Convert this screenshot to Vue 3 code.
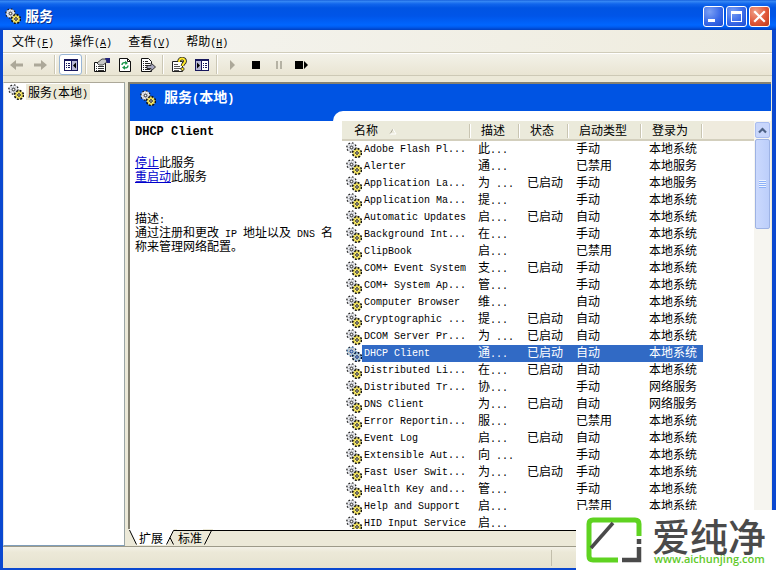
<script setup>
import { h, ref } from 'vue'

// Latin runs are set in a half-width monospace face beside the full-width characters.
const Mixed = (props) =>
  props.text.split(/([\x20-\x7e]+)/).filter(Boolean).map((run) =>
    /^[\x20-\x7e]/.test(run) ? h('span', { class: 'latin' }, run) : run
  )
Mixed.props = ['text']

const Gears = () =>
  h('svg', { class: 'gears', viewBox: '0 0 16 16', width: 16, height: 16, 'aria-hidden': 'true' }, [
    h('circle', { cx: 5.5, cy: 5.5, r: 4.6, fill: '#c3c6cd', stroke: '#222', 'stroke-width': 1.5, 'stroke-dasharray': '1.5 2.1' }),
    h('circle', { cx: 5.5, cy: 5.5, r: 3.2, fill: 'none', stroke: '#f2f3f6', 'stroke-width': 1.4, 'stroke-dasharray': '1.7 0.8' }),
    h('circle', { cx: 5.5, cy: 5.5, r: 1.3, fill: '#fff', stroke: '#222', 'stroke-width': 0.9 }),
    h('circle', { cx: 11, cy: 11, r: 4.4, fill: '#f4e76a', stroke: '#111', 'stroke-width': 1.6, 'stroke-dasharray': '2 1.45' }),
    h('circle', { cx: 11, cy: 11, r: 3, fill: '#fff387', stroke: '#e2d24e', 'stroke-width': 1 }),
    h('circle', { cx: 11, cy: 11, r: 1.3, fill: '#fff', stroke: '#111', 'stroke-width': 1 })
  ])

const menus = [['文件', 'F'], ['操作', 'A'], ['查看', 'V'], ['帮助', 'H']]

const S = '本地系统'
const R = '已启动'
const services = [
  ['Adobe Flash Pl...', '此...', '', '手动', S],
  ['Alerter', '通...', '', '已禁用', '本地服务'],
  ['Application La...', '为 ...', R, '手动', '本地服务'],
  ['Application Ma...', '提...', '', '手动', S],
  ['Automatic Updates', '启...', R, '自动', S],
  ['Background Int...', '在...', '', '手动', S],
  ['ClipBook', '启...', '', '已禁用', S],
  ['COM+ Event System', '支...', R, '手动', S],
  ['COM+ System Ap...', '管...', '', '手动', S],
  ['Computer Browser', '维...', '', '自动', S],
  ['Cryptographic ...', '提...', R, '自动', S],
  ['DCOM Server Pr...', '为 ...', R, '自动', S],
  ['DHCP Client', '通...', R, '自动', S],
  ['Distributed Li...', '在...', R, '自动', S],
  ['Distributed Tr...', '协...', '', '手动', '网络服务'],
  ['DNS Client', '为...', R, '自动', '网络服务'],
  ['Error Reportin...', '服...', '', '已禁用', S],
  ['Event Log', '启...', R, '自动', S],
  ['Extensible Aut...', '向 ...', '', '手动', S],
  ['Fast User Swit...', '为...', R, '手动', S],
  ['Health Key and...', '管...', '', '手动', S],
  ['Help and Support', '启...', '', '已禁用', S],
  ['HID Input Service', '启...', '', '', '']
]
const selected = ref(12)
</script>

<template>
  <div class="window">
    <header class="titlebar">
      <Gears />
      <h1>服务</h1>
      <button class="cap" aria-label="最小化"><svg viewBox="0 0 19 19"><path d="M4 12h7v3H4z" fill="#fff" /></svg></button>
      <button class="cap" aria-label="最大化"><svg viewBox="0 0 19 19"><path d="M4 4h11v11H4zM5 7v7h9V7z" fill="#fff" fill-rule="evenodd" /></svg></button>
      <button class="cap close" aria-label="关闭"><svg viewBox="0 0 19 19"><path d="M5 5l9 9M14 5l-9 9" stroke="#fff" stroke-width="2.2" stroke-linecap="square" /></svg></button>
    </header>

    <div class="client">
      <nav class="menubar">
        <button v-for="m in menus" :key="m[1]">{{ m[0] }}<span class="latin">(<u>{{ m[1] }}</u>)</span></button>
      </nav>

      <div class="toolbar">
        <button aria-label="后退"><svg viewBox="0 0 16 16"><path d="M1 8l6-5v3.500h7v3H7V13z" fill="#aca899" /></svg></button>
        <button aria-label="前进"><svg viewBox="0 0 16 16"><path d="M15 8L9 3v3.500H2v3h7V13z" fill="#aca899" /></svg></button>
        <i></i>
        <button class="on" aria-label="显示/隐藏控制台树">
          <svg viewBox="0 0 16 16"><path d="M1 2h14v12H1z" fill="#17175c" /><path d="M2 4h6v9H2z" fill="#fff" /><path d="M9 4h5v9H9z" fill="#b9b9d6" /><path d="M3 6h1v1H3zM5 6h2v1H5zM3 8h1v1H3zM5 8h2v1H5zM3 10h1v1H3zM5 10h2v1H5z" fill="#17175c" /><path d="M13 5.500v6L10 8.500z" fill="#000" /></svg>
        </button>
        <i></i>
        <button aria-label="属性">
          <svg viewBox="0 0 16 16"><path d="M.5 5.500h11v9H.5z" fill="#fff" stroke="#111" /><path d="M2 9h1v1H2zM4 9h6v1H4zM2 11h1v1H2zM4 11h6v1H4zM2 13h1v1H2zM4 13h6v1H4z" fill="#333" /><path d="M3 6l5-4h4l1 3-4 3H7L5 8z" fill="#c8c8c8" stroke="#222" stroke-width=".8" /><path d="M11 1h5v5h-3z" fill="#25257c" /></svg>
        </button>
        <button aria-label="刷新">
          <svg viewBox="0 0 16 16"><path d="M2.500 1.500h8l3 3v10h-11z" fill="#fff" stroke="#111" /><path d="M10.500 1.500v3h3" fill="none" stroke="#111" /><path d="M5 8c0-2 2-3 4-2M11 8.500c0 2-2 3-4 2" fill="none" stroke="#159447" stroke-width="1.400" /><path d="M8 3.800L11 6 8.500 8zM8 8.500L5 10.500 8 12.700z" fill="#159447" /></svg>
        </button>
        <button aria-label="导出列表">
          <svg viewBox="0 0 16 16"><path d="M1.500 1.500h7l3 3v10h-10z" fill="#fff" stroke="#111" /><path d="M3 4h1v1H3zM5 4h3v1H5zM3 6h1v1H3zM5 6h5v1H5zM3 8h1v1H3zM5 8h3v1H5zM3 10h1v1H3zM5 10h3v1H5zM3 12h1v1H3zM5 12h5v1H5z" fill="#222" /><path d="M7 8.500h4v-2.500l4.500 4-4.500 4v-2.500H7z" fill="#a5a5bd" stroke="#222" stroke-width=".9" /></svg>
        </button>
        <i></i>
        <button aria-label="帮助">
          <svg viewBox="0 0 16 16"><path d="M1.500 4.500h10v10h-10z" fill="#fff" stroke="#222" /><path d="M3 7h4v1H3zM3 9h6v1H3zM3 11h7v1H3zM3 13h5v1H3z" fill="#555" /><path d="M8 5c0-5 6.500-4 6-.500C13.800 6.300 11.500 6.500 11.500 9" fill="none" stroke="#222" stroke-width="3.600" /><path d="M8 5c0-5 6.500-4 6-.500C13.800 6.300 11.500 6.500 11.500 9" fill="none" stroke="#ffe82a" stroke-width="2" /><circle cx="11.500" cy="12" r="1.600" fill="#ffe82a" stroke="#222" stroke-width=".8" /></svg>
        </button>
        <button aria-label="扩展视图">
          <svg viewBox="0 0 16 16"><path d="M1 2h14v12H1z" fill="#17175c" /><path d="M2 4h5v9H2z" fill="#b9b9d6" /><path d="M8 4h6v9H8z" fill="#fff" /><path d="M9 6h1v1H9zM11 6h2v1h-2zM9 8h1v1H9zM11 8h2v1h-2zM9 10h1v1H9zM11 10h2v1h-2z" fill="#17175c" /><path d="M3 5.500v6l3-3z" fill="#000" /></svg>
        </button>
        <i></i>
        <button aria-label="启动服务"><svg viewBox="0 0 16 16"><path d="M5 3v10l5-5z" fill="#aca899" /></svg></button>
        <button aria-label="停止服务"><svg viewBox="0 0 16 16"><path d="M4 4h8v8H4z" fill="#000" /></svg></button>
        <button aria-label="暂停服务"><svg viewBox="0 0 16 16"><path d="M5 4h2v8H5zM9 4h2v8H9z" fill="#b5b2a4" /></svg></button>
        <button aria-label="重新启动服务"><svg viewBox="0 0 16 16"><path d="M1 4h8v8H1zM10 4v8l4-4z" fill="#000" /></svg></button>
      </div>

      <main class="panes">
        <aside class="tree">
          <a href="#" class="node"><Gears /><span><Mixed text="服务(本地)" /></span></a>
        </aside>

        <section class="right">
          <div class="view">
            <div class="banner"><Gears /><h2><Mixed text="服务(本地)" /></h2></div>
            <div class="body">
              <article class="detail">
                <h3>DHCP Client</h3>
                <p><a href="#">停止</a>此服务<br><a href="#">重启动</a>此服务</p>
                <p class="about"><Mixed text="描述:" /><br><Mixed text="通过注册和更改 IP 地址以及 DNS 名称来管理网络配置。" /></p>
              </article>
              <div class="listing">
                <div class="list">
                  <table>
                    <colgroup><col class="c-name"><col class="c-desc"><col class="c-state"><col class="c-type"><col class="c-logon"><col></colgroup>
                    <thead>
                      <tr>
                        <th>名称<svg class="sort" viewBox="0 0 8 7"><path d="M1 6l3-5" stroke="#aca899" fill="none" /><path d="M4 1l3 5H1" stroke="#fff" fill="none" /></svg></th>
                        <th>描述</th><th>状态</th><th>启动类型</th><th>登录为</th><th></th>
                      </tr>
                    </thead>
                    <tbody>
                      <tr v-for="(s, i) in services" :key="s[0]" :class="{ sel: i === selected }" @click="selected = i">
                        <td class="name"><div><Gears /><span class="latin label">{{ s[0] }}</span></div></td>
                        <td v-for="n in 4" :key="n"><Mixed :text="s[n]" /></td>
                        <td class="rest"></td>
                      </tr>
                    </tbody>
                  </table>
                </div>
                <div class="scroll">
                  <button class="up" aria-label="向上滚动"><svg viewBox="0 0 13 13"><path d="M3 8.500L6.500 5 10 8.500" fill="none" stroke="#4d6185" stroke-width="2.200" /></svg></button>
                  <div class="thumb"><b></b></div>
                </div>
              </div>
            </div>
          </div>
          <div class="tabs">
            <svg width="8" height="16" viewBox="0 0 8 16"><path d="M0 0h8v16z" fill="#fff" /><path d="M.5 1L7.500 15.500" stroke="#000" /></svg>
            <button class="active">扩展</button>
            <svg width="12" height="16" viewBox="0 0 12 16"><path d="M0 0h9L2 16H0z" fill="#fff" /><path d="M1.500 15.500L8.500 1.500H12M5 8.500l3.500 7" fill="none" stroke="#000" /></svg>
            <button>标准</button>
            <svg width="10" height="16" viewBox="0 0 10 16"><path d="M0 1.500h10M1.500 15.500l7-14" stroke="#000" /></svg>
            <span class="rule"></span>
          </div>
        </section>
      </main>

      <footer class="status"><span></span></footer>
    </div>

    <div class="brand">
      <svg viewBox="0 0 56 46" width="56" height="46">
        <path d="M53 19V7q0-4-4-4H7Q3 3 3 7v32q0 4 4 4h25" fill="none" stroke="#5fd321" stroke-width="5" />
        <path d="M53 22v5M53 30v13H36" fill="none" stroke="#4a4a4a" stroke-width="4.500" />
        <path d="M5 31L27 6" stroke="#4a4a4a" stroke-width="3.500" />
      </svg>
      <div><strong>爱纯净</strong><em>www.aichunjing.com</em></div>
    </div>
  </div>
</template>

<style>
body { margin: 0; }
.latin { font-family: "Liberation Mono", monospace; font-size: 10px; line-height: 8px; white-space: pre-wrap; }
.gears { display: block; flex: none; }
</style>

<style scoped>
* { box-sizing: border-box; }
.window {
  position: relative;
  display: flex;
  flex-direction: column;
  height: 100vh;
  overflow: hidden;
  background: #0a48d0;
  color: #000;
  font: 12px/14px "Noto Sans CJK SC", sans-serif;
}
button { margin: 0; padding: 0; border: 0; background: none; color: inherit; font: inherit; }
h1, h2, h3, p { margin: 0; }

.titlebar {
  flex: none;
  display: flex;
  align-items: center;
  gap: 2px;
  height: 30px;
  padding: 2px 6px 0 5px;
  background: linear-gradient(#0a52d4 0, #3a8bf5 1px, #1166ec 4px, #0054e3 8px, #0055e8 16px, #0066ff 25px, #005cf0 27px, #003fc0 30px);
}
h1 { flex: 1; padding: 0 0 2px 2px; color: #fff; font-size: 14px; line-height: 18px; font-weight: 700; text-shadow: 1px 1px #0a2f8a; }
.cap { width: 21px; height: 21px; border: 1px solid #fff; border-radius: 3px; background: radial-gradient(circle at 30% 25%, #7ba0f4, #3a6ae8 55%, #1c4cd2); }
.cap svg { display: block; width: 19px; height: 19px; }
.close { background: radial-gradient(circle at 30% 25%, #f0a088, #e0583a 55%, #c03a18); }

.client { flex: 1; min-height: 0; display: flex; flex-direction: column; margin: 0 4px 2px 3px; background: #ece9d8; }
.menubar { flex: none; display: flex; gap: 16px; height: 23px; padding: 0 9px 1px; border-bottom: 1px solid #d0ccba; background: linear-gradient(90deg, #f5f5f2, #efecde); }
.menubar button { line-height: 20px; }
.toolbar { flex: none; display: flex; align-items: center; height: 23px; padding-left: 2px; border-top: 1px solid #fff; border-bottom: 1px solid #cdc9b6; background: linear-gradient(#f3f1e8, #e9e5d3); }
.toolbar button { display: grid; place-items: center; width: 23px; height: 21px; }
.toolbar svg { display: block; width: 16px; height: 16px; }
.toolbar .on { border: 1px solid #98b5d5; border-radius: 3px; background: #fff; }
.toolbar i { width: 8px; height: 19px; border-left: 3px solid transparent; background: linear-gradient(90deg, #cbc7b5 1px, #fff 1px, #fff 2px, transparent 2px) no-repeat; background-origin: padding-box; background-clip: padding-box; }

.panes { flex: 1; min-height: 0; display: flex; gap: 3px; padding-top: 6px; }
.tree { flex: none; width: 122px; border: 1px solid #7f9db9; border-color: #aca899 #9aa5a5 #7f9db9 #dde3e8; background: #fff; padding: 1px 4px; }
.node { display: flex; gap: 2px; color: #000; text-decoration: none; }
.node > span { padding: 0 2px; height: 16px; line-height: 15px; background: #ece9d8; }
.right { flex: 1; min-width: 0; display: flex; flex-direction: column; padding-right: 1px; }
.view { flex: 1; min-height: 0; display: flex; flex-direction: column; border: solid #858272; border-width: 2px 0 0 2px; background: #fff; }
.banner { flex: none; display: flex; align-items: center; gap: 8px; height: 27px; padding: 0 10px; background: #0054e3; color: #fff; }
h2 { font-size: 14px; line-height: 18px; padding-bottom: 4px; }
h2 :deep(.latin) { font-size: 12px; }
.body { flex: 1; min-height: 0; display: flex; background: linear-gradient(#0054e3 10px, #fff 10px); }
.detail { flex: none; width: 203px; padding: 14px 0 0 5px; }
h3 { font: 700 12px/14px "Liberation Mono", monospace; margin-bottom: 16px; }
.detail p { width: 200px; }
.detail a { color: #00c; text-decoration: underline; }
.detail .about { margin-top: 28px; }
.listing { flex: 1; min-width: 0; display: flex; padding: 10px 0 0 9px; border-top-left-radius: 10px; background: #fff; }
.list { flex: 1; min-width: 0; overflow: hidden; }
table { width: 100%; table-layout: fixed; border-collapse: separate; border-spacing: 0; }
.c-name { width: 129px; }
.c-desc, .c-state { width: 49px; }
.c-type { width: 73px; }
.c-logon { width: 61px; }
th { height: 20px; padding: 0 0 0 10px; text-align: left; font-weight: 400; line-height: 16px; white-space: nowrap; border-bottom: 2px solid #d3cfbd; background: linear-gradient(#c9c5b2, #c9c5b2) right 1px top 3px / 1px 14px no-repeat, linear-gradient(#fff, #fff) right 0 top 3px / 1px 14px no-repeat, #ebeadb; }
th:first-child { padding-left: 12px; }
th:last-child { background: #efebde; }
.sort { width: 8px; height: 7px; margin-left: 11px; }
td { height: 17px; padding: 0 0 3px 7px; line-height: 14px; white-space: nowrap; }
td.name { padding: 0 0 0 4px; }
.name div { display: flex; align-items: center; }
.name .label { flex: 1; padding-left: 2px; line-height: 17px; }
.sel td:not(.name):not(.rest), .sel .label { background: #316ac5; color: #fff; }
.sel .gears { filter: sepia(1) hue-rotate(180deg) saturate(2.5) brightness(0.8); }
.scroll { flex: none; width: 17px; padding: 1px 1px 0; background: #f6f5f0; }
.up { display: block; width: 15px; height: 16px; border: 1px solid #a9bdf0; border-radius: 2px; background: #c8d6fb; }
.up svg { display: block; width: 13px; height: 13px; }
.thumb { display: grid; place-items: center; height: 90px; margin-top: 1px; border: 1px solid #9db2e4; border-radius: 2px; background: linear-gradient(90deg, #cbd9fd, #bccefa); }
.thumb b { width: 7px; height: 8px; background: repeating-linear-gradient(#eef4fe 0 1px, #8cb0f8 1px 2px); }

.tabs { flex: none; display: flex; height: 17px; padding-left: 1px; }
.tabs svg { display: block; flex: none; }
.tabs button { height: 16px; padding: 0 1px; line-height: 14px; border-top: 1px solid #fff; background: linear-gradient(#000, #000) top / 100% 1px no-repeat; background-origin: padding-box; }
.tabs .active { padding: 0 2px; background: #fff; }
.rule { flex: 1; border-top: 1px solid #fff; background: linear-gradient(#000, #000) top / 100% 1px no-repeat; }
.status { flex: none; height: 22px; border-top: 1px solid #9d9a89; background: linear-gradient(#f3f1e7, #ece9d8 5px, #e6e2cf); display: flex; padding: 3px 220px 2px 0; }
.status span { flex: 1; border-right: 1px solid #c2beab; }

.brand { position: absolute; right: 0; bottom: 0; display: flex; gap: 10px; width: 200px; height: 60px; padding: 7px 0 0 10px; background: #fff; }
.brand svg { flex: none; }
.brand strong { display: block; color: #4a4a4a; font-size: 38px; line-height: 36px; font-weight: 500; white-space: nowrap; }
.brand em { display: block; padding-left: 2px; color: #5fc92a; font: 600 11px/12px "Open Sans", sans-serif; white-space: nowrap; }
</style>
